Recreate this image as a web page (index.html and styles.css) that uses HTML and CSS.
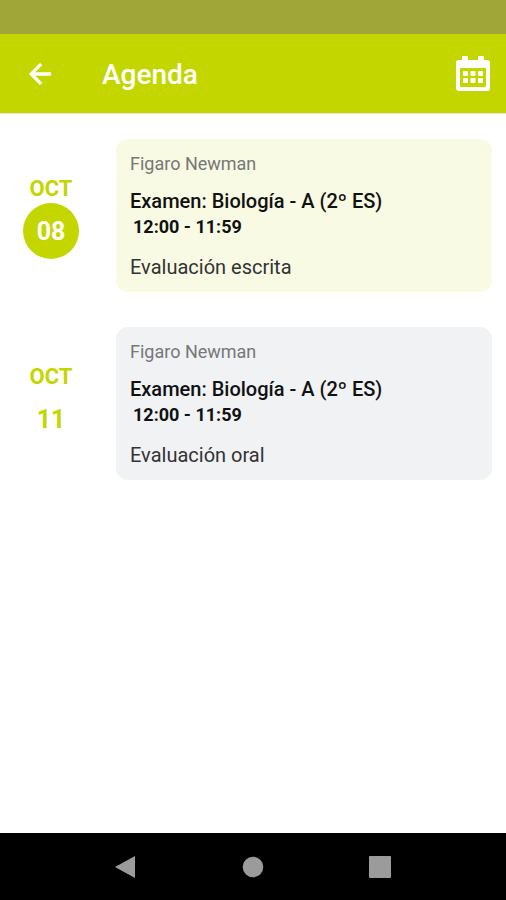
FILE: index.html
```html
<!DOCTYPE html>
<html lang="es">
<head>
<meta charset="utf-8">
<meta name="viewport" content="width=device-width, initial-scale=1">
<title>Agenda</title>
<link rel="stylesheet" href="styles.css">
</head>
<body>
<div class="status-bar"></div>
<header class="app-bar">
  <button class="icon-button back" type="button" aria-label="Volver">
    <svg width="32" height="32" viewBox="0 0 24 24"><path d="M20 11H7.830l5.590-5.590L12 4l-8 8 8 8 1.410-1.410L7.830 13H20v-2z" fill="#fff" stroke="#fff" stroke-width=".6"/></svg>
  </button>
  <h1 class="title">Agenda</h1>
  <button class="icon-button" type="button" aria-label="Calendario">
    <svg width="36" height="36" viewBox="0 0 36 36" fill="#fff">
      <path fill-rule="evenodd" d="M4 4H32a3 3 0 0 1 3 3V32a3 3 0 0 1-3 3H4a3 3 0 0 1-3-3V7a3 3 0 0 1 3-3zM5 12V30a1 1 0 0 0 1 1H30a1 1 0 0 0 1-1V12z"/>
      <rect x="7" y="0" width="6" height="6" rx="1"/><rect x="23" y="0" width="6" height="6" rx="1"/>
      <rect x="8" y="15" width="5" height="5" rx="1"/><rect x="15.500" y="15" width="5" height="5" rx="1"/><rect x="23" y="15" width="5" height="5" rx="1"/>
      <rect x="8" y="22" width="5" height="5" rx="1"/><rect x="15.500" y="22" width="5" height="5" rx="1"/><rect x="23" y="22" width="5" height="5" rx="1"/>
    </svg>
  </button>
</header>
<main class="events">
  <article class="event">
    <div class="date"><span class="month">OCT</span><span class="day today">08</span></div>
    <section class="card current">
      <p class="student">Figaro Newman</p>
      <h2 class="subject">Examen: Biología - A (2º ES)</h2>
      <p class="time">12:00 - 11:59</p>
      <p class="note">Evaluación escrita</p>
    </section>
  </article>
  <article class="event">
    <div class="date"><span class="month">OCT</span><span class="day">11</span></div>
    <section class="card">
      <p class="student">Figaro Newman</p>
      <h2 class="subject">Examen: Biología - A (2º ES)</h2>
      <p class="time">12:00 - 11:59</p>
      <p class="note">Evaluación oral</p>
    </section>
  </article>
</main>
<nav class="system-nav">
  <button class="icon-button" type="button" aria-label="Atrás"><svg width="24" height="24" viewBox="0 0 24 24"><path d="M21 1v22L1 12z" fill="#9b9b9b"/></svg></button>
  <button class="icon-button" type="button" aria-label="Inicio"><svg width="24" height="24" viewBox="0 0 24 24"><circle cx="12" cy="12" r="10.300" fill="#9b9b9b"/></svg></button>
  <button class="icon-button" type="button" aria-label="Recientes"><svg width="24" height="24" viewBox="0 0 24 24"><rect x="1" y="1" width="22" height="22" rx="1" fill="#9b9b9b"/></svg></button>
</nav>
</body>
</html>
```
FILE: styles.css
```css
* { box-sizing: border-box; }
body { margin: 0; min-height: 100vh; display: flex; flex-direction: column; background: #fff; color: #111; font-family: Roboto, "Liberation Sans", sans-serif; }
h1, h2, p { margin: 0; }
.status-bar { height: 34px; background: #a0a637; }
.app-bar { height: 79px; padding: 0 15px 0 24px; display: flex; align-items: center; background: #c4d600; box-shadow: 0 1px 1px #e6e6dc; }
.icon-button { display: flex; padding: 0; border: 0; background: none; }
.back { margin-right: 46px; }
.title { flex: 1; padding-top: 3px; color: #fff; font-size: 28px; line-height: 32px; font-weight: 500; }
.events { flex: 1; padding: 26px 14px; display: flex; flex-direction: column; gap: 35px; }
.event { display: flex; }
.date { width: 102px; padding: 36px 28px 0 0; display: flex; flex-direction: column; align-items: center; color: #c4d600; }
.month { font-size: 22px; line-height: 28px; font-weight: 700; }
.day { width: 56px; height: 56px; padding-top: 2px; font-size: 25px; line-height: 54px; font-weight: 700; text-align: center; }
.today { border-radius: 50%; background: #c4d600; color: #fff; }
.card { flex: 1; padding: 12px 14px; border-radius: 12px; background: #f0f2f4; }
.current { background: #f8fae3; }
.student { color: #777; font-size: 18px; line-height: 25px; }
.subject { margin-top: 12px; font-size: 20px; line-height: 26px; font-weight: 500; }
.time { padding-left: 3px; font-size: 18px; line-height: 26px; font-weight: 700; }
.note { margin-top: 14px; font-size: 20px; line-height: 26px; color: #333; }
.system-nav { height: 67px; display: flex; justify-content: center; align-items: center; gap: 103px; background: #000; }
```
